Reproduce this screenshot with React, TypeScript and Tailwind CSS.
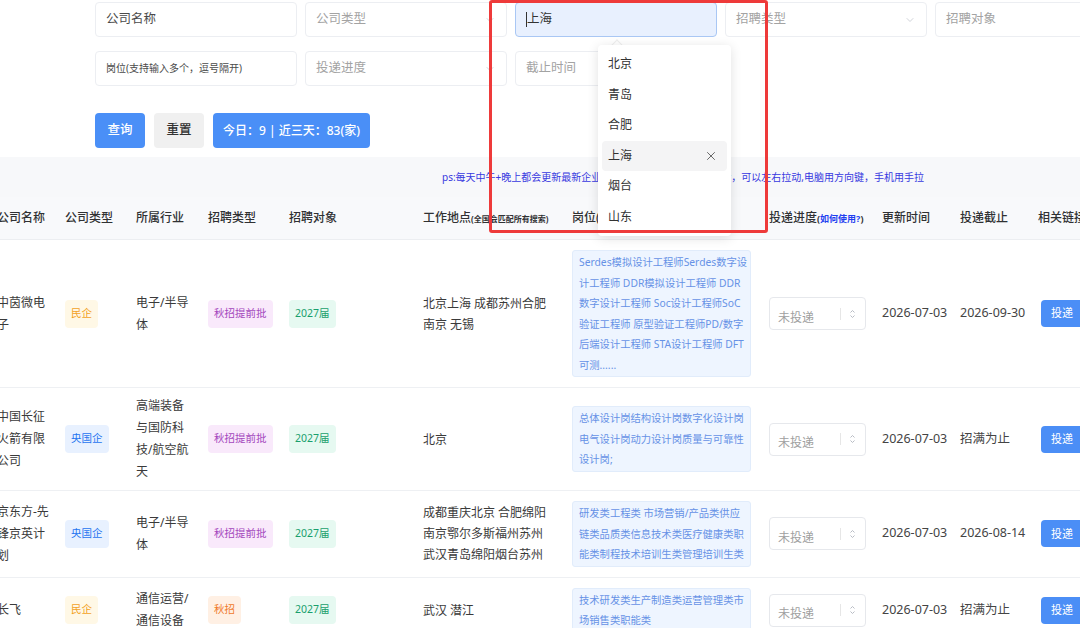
import { ChevronDown, X } from "lucide-react";

type Row = {
  name: string[];
  type: string;
  industry: string[];
  rtype: string;
  target: string;
  loc: string[];
  pos: string[];
  update: string;
  deadline: string;
};

const rows: Row[] = [
  {
    name: ["中茵微电", "子"],
    type: "民企",
    industry: ["电子/半导", "体"],
    rtype: "秋招提前批",
    target: "2027届",
    loc: ["北京上海 成都苏州合肥", "南京 无锡"],
    pos: [
      "Serdes模拟设计工程师Serdes数字设",
      "计工程师 DDR模拟设计工程师 DDR",
      "数字设计工程师 Soc设计工程师SoC",
      "验证工程师 原型验证工程师PD/数字",
      "后端设计工程师 STA设计工程师 DFT",
      "可测......",
    ],
    update: "2026-07-03",
    deadline: "2026-09-30",
  },
  {
    name: ["中国长征", "火箭有限", "公司"],
    type: "央国企",
    industry: ["高端装备", "与国防科", "技/航空航", "天"],
    rtype: "秋招提前批",
    target: "2027届",
    loc: ["北京"],
    pos: ["总体设计岗结构设计岗数字化设计岗", "电气设计岗动力设计岗质量与可靠性", "设计岗;"],
    update: "2026-07-03",
    deadline: "招满为止",
  },
  {
    name: ["京东方-先", "锋京英计", "划"],
    type: "央国企",
    industry: ["电子/半导", "体"],
    rtype: "秋招提前批",
    target: "2027届",
    loc: ["成都重庆北京 合肥绵阳", "南京鄂尔多斯福州苏州", "武汉青岛绵阳烟台苏州"],
    pos: ["研发类工程类 市场营销/产品类供应", "链类品质类信息技术类医疗健康类职", "能类制程技术培训生类管理培训生类"],
    update: "2026-07-03",
    deadline: "2026-08-14",
  },
  {
    name: ["长飞"],
    type: "民企",
    industry: ["通信运营/", "通信设备"],
    rtype: "秋招",
    target: "2027届",
    loc: ["武汉 潜江"],
    pos: ["技术研发类生产制造类运营管理类市", "场销售类职能类"],
    update: "2026-07-03",
    deadline: "招满为止",
  },
];

const tagStyle: Record<string, string> = {
  民企: "bg-[#fff8e6] text-[#f3a21f]",
  央国企: "bg-[#e8f1ff] text-[#1f74f0]",
  秋招提前批: "bg-[#f9e9fb] text-[#a448bd]",
  秋招: "bg-[#fff0e4] text-[#f07b2c]",
  "2027届": "bg-[#e6f9f1] text-[#19a06d]",
};

const cols =
  "grid grid-cols-[68px_71px_72px_81px_134px_149px_197px_113px_78px_78px_100px]";

const Tag = ({ label }: { label: string }) => (
  <span
    className={`inline-flex h-[28px] items-center rounded-[4px] px-[6px] text-[10.5px] ${tagStyle[label]}`}
  >
    {label}
  </span>
);

const Lines = ({ lines }: { lines: string[] }) => (
  <div className="leading-[22px]">
    {lines.map((l) => (
      <div key={l} className="whitespace-nowrap">
        {l}
      </div>
    ))}
  </div>
);

const Field = ({
  text,
  dark,
  select,
  small,
}: {
  text: string;
  dark?: boolean;
  select?: boolean;
  small?: boolean;
}) => (
  <div className="flex h-[35px] w-[202px] shrink-0 items-center justify-between rounded-[4px] border border-[#eceef2] bg-white pl-[10px] pr-[10px]">
    <span
      className={`${small ? "text-[10px]" : "text-[12.5px]"} ${
        dark ? "text-[#4a4a4a]" : "text-[#a3a3a3]"
      }`}
    >
      {text}
    </span>
    {select && <ChevronDown size={12} strokeWidth={1.5} className="text-[#c0c4cc]" />}
  </div>
);

const UpDown = () => (
  <svg width="7" height="10" viewBox="0 0 7 10" fill="none" stroke="#b8bcc4" strokeWidth="1">
    <path d="M1.5 3.5 3.5 1.5 5.5 3.5" />
    <path d="M1.5 6.5 3.5 8.5 5.5 6.5" />
  </svg>
);

const TableRow = ({ row }: { row: Row }) => (
  <div className={`${cols} items-center border-b border-[#eef0f3] py-[7px] text-[12px] text-[#3a3a3a]`}>
    <Lines lines={row.name} />
    <div>
      <Tag label={row.type} />
    </div>
    <Lines lines={row.industry} />
    <div>
      <Tag label={row.rtype} />
    </div>
    <div>
      <Tag label={row.target} />
    </div>
    <div className="leading-[21px]">
      {row.loc.map((l) => (
        <div key={l} className="whitespace-nowrap">
          {l}
        </div>
      ))}
    </div>
    <div className="my-[3px] w-[179px] rounded-[3px] border border-[#e1ecfb] bg-[#eef5ff] px-[6px] py-px text-[10.3px] leading-[20.5px] text-[#6692e6]">
      {row.pos.map((l) => (
        <div key={l} className="whitespace-nowrap">
          {l}
        </div>
      ))}
    </div>
    <div>
      <div className="flex h-[33px] w-[97px] items-center rounded-[4px] border border-[#e6e8ec] bg-white pl-[8px] pr-[9px]">
        <span className="mt-[8px] flex-1 text-[12px] text-[#a0a0a0]">未投递</span>
        <span className="mr-[8px] h-[12px] w-px bg-[#e6e6e6]" />
        <UpDown />
      </div>
    </div>
    <div className="text-[12.5px] text-[#444]">{row.update}</div>
    <div className="text-[12.5px] text-[#444]">{row.deadline}</div>
    <div>
      <button className="ml-[3px] flex h-[27px] w-[42px] items-center justify-center rounded-[4px] bg-[#4b8ef6] text-[11px] text-white">
        投递
      </button>
    </div>
  </div>
);

const cities = ["北京", "青岛", "合肥", "上海", "烟台", "山东"];

export default function App() {
  return (
    <div className="relative h-[628px] w-[1080px] overflow-hidden bg-white font-['Noto_Sans','Noto_Sans_CJK_SC',sans-serif]">
      <div className="pl-[95px] pt-[2px]">
        <div className="flex gap-[8px]">
          <Field text="公司名称" dark />
          <Field text="公司类型" select />
          <div className="flex h-[35px] w-[202px] shrink-0 items-center rounded-[4px] border border-[#a9c7f4] bg-[#e8f0fe] pl-[10px]">
            <span className="h-[15px] w-px bg-[#333]" />
            <span className="text-[12.5px] text-[#333]">上海</span>
          </div>
          <Field text="招聘类型" select />
          <Field text="招聘对象" />
        </div>
        <div className="mt-[14px] flex gap-[8px]">
          <Field text="岗位(支持输入多个，逗号隔开)" dark small />
          <Field text="投递进度" select />
          <Field text="截止时间" />
        </div>
        <div className="mt-[27px] flex gap-[9px]">
          <button className="h-[35px] w-[50px] rounded-[4px] bg-[#4a8ff7] text-[12.5px] font-medium text-white">
            查询
          </button>
          <button className="h-[35px] w-[50px] rounded-[4px] bg-[#f0f0f0] text-[12.5px] font-medium text-[#333]">
            重置
          </button>
          <button className="h-[35px] w-[157px] rounded-[4px] bg-[#4a8ff7] text-[12px] font-medium text-white">
            今日：9 | 近三天：83(家)
          </button>
        </div>
      </div>

      <div className="mt-[9px] flex h-[40px] items-center bg-[#f7f8fa] pl-[442px] text-[10px] text-[#3838e0]">
        <span className="whitespace-nowrap">
          ps:每天中午+晚上都会更新最新企业信息，如果表格显示不全的话，可以左右拉动,电脑用方向键，手机用手拉
        </span>
      </div>

      <div className="-ml-[3px] w-[1142px]">
        <div className={`${cols} h-[43px] items-center border-b border-[#eceef1] bg-[#f8f9fb] text-[12px] font-medium text-[#303133]`}>
          <div>公司名称</div>
          <div>公司类型</div>
          <div>所属行业</div>
          <div>招聘类型</div>
          <div>招聘对象</div>
          <div className="whitespace-nowrap">
            工作地点<span className="text-[8px] font-bold">(全国会匹配所有搜索)</span>
          </div>
          <div className="whitespace-nowrap">
            岗位(<span className="text-[8px] font-bold">点击可查看全部</span>)
          </div>
          <div className="whitespace-nowrap">
            投递进度<span className="text-[9px] font-bold">(<span className="text-[#1f3ff0]">如何使用?</span>)</span>
          </div>
          <div>更新时间</div>
          <div>投递截止</div>
          <div className="whitespace-nowrap">相关链接</div>
        </div>
        {rows.map((r) => (
          <TableRow key={r.name.join("")} row={r} />
        ))}
      </div>

      {/* city dropdown */}
      <div className="absolute left-[613px] top-[41px] h-[8px] w-[8px] rotate-45 border-l border-t border-[#eeeeee] bg-white" />
      <div className="absolute left-[598px] top-[45px] w-[133px] rounded-[4px] bg-white px-[4px] py-[4px] shadow-[0_2px_12px_rgba(0,0,0,0.12)]">
        {cities.map((c) => (
          <div
            key={c}
            className={`flex h-[30.5px] items-center justify-between rounded-[4px] pl-[6px] pr-[9px] text-[12px] text-[#333] ${
              c === "上海" ? "bg-[#f4f4f5]" : ""
            }`}
          >
            <span>{c}</span>
            {c === "上海" && <X size={14} strokeWidth={1.5} className="text-[#555]" />}
          </div>
        ))}
      </div>

      {/* annotation frame */}
      <div className="pointer-events-none absolute left-[489px] top-0 h-[233px] w-[279px] rounded-[3px] border-[3px] border-[#ee3a3a]" />
    </div>
  );
}
